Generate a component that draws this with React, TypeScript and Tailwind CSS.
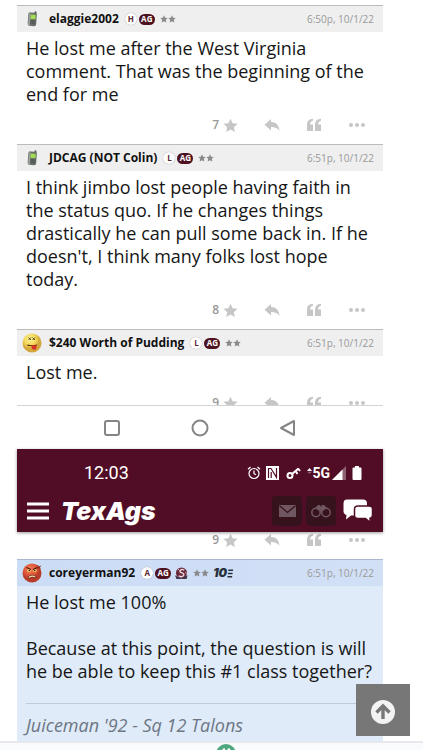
import type { ReactNode } from "react";

const STAR = "M12 1l3.3 7.4 8 .8-6 5.4 1.7 7.9L12 18.4l-7 4.1 1.7-7.9-6-5.4 8-.8z";

function Star({ className }: { className: string }) {
  return (
    <svg viewBox="0 0 24 24" className={className} fill="currentColor" aria-hidden="true">
      <path d={STAR} />
    </svg>
  );
}

function PhoneAvatar() {
  return (
    <svg viewBox="0 0 20 20" className="size-5" aria-hidden="true">
      <g transform="rotate(4 10 10)">
        <rect x="12" y="2" width="2" height="5" rx="1" fill="#5d635c" />
        <rect x="6" y="3.500" width="8.500" height="13.500" rx="2" fill="#666c66" />
        <rect x="6.500" y="4.500" width="2" height="12" rx="1" fill="#9a9f99" />
        <rect x="8.500" y="5.500" width="5" height="4.500" rx=".5" fill="#a2dc52" />
        <path d="M8.500 12h5M8.500 14h5" stroke="#3f453f" strokeDasharray="1 .5" />
      </g>
    </svg>
  );
}

function DizzyAvatar() {
  return (
    <svg viewBox="0 0 20 20" className="size-5" aria-hidden="true">
      <defs>
        <radialGradient id="dizzy" cx=".4" cy=".3">
          <stop offset="0" stopColor="#fff3a0" />
          <stop offset=".6" stopColor="#f3d858" />
          <stop offset="1" stopColor="#d3a63c" />
        </radialGradient>
      </defs>
      <circle cx="10" cy="10" r="9.500" fill="url(#dizzy)" />
      <path d="M6.500 4.500l2.500 2.500m0-2.500l-2.500 2.500M10.500 4.500l2.500 2.500m0-2.500l-2.500 2.500" stroke="#4b4015" strokeWidth=".9" />
      <path d="M5 11.500q5 1.500 10 0l-.5 1.500H6z" fill="#4d2208" />
      <path d="M9.500 12.300h5v2q0 3-2.500 2.500-2.500-.5-2.500-2.500z" fill="#d93428" />
    </svg>
  );
}

function AngryAvatar() {
  return (
    <svg viewBox="0 0 20 20" className="size-5" aria-hidden="true">
      <defs>
        <radialGradient id="angry" cx=".4" cy=".3">
          <stop offset="0" stopColor="#f08158" />
          <stop offset=".6" stopColor="#e25a3c" />
          <stop offset="1" stopColor="#b83c2a" />
        </radialGradient>
      </defs>
      <circle cx="10" cy="10" r="9.500" fill="url(#angry)" />
      <circle cx="7" cy="7.500" r="1.700" fill="#f6cf5a" />
      <circle cx="13" cy="7.500" r="1.700" fill="#f6cf5a" />
      <circle cx="7.300" cy="7.500" r=".8" fill="#301008" />
      <circle cx="12.700" cy="7.500" r=".8" fill="#301008" />
      <path d="M4.500 4.500l4.500 2M15.500 4.500l-4.500 2" stroke="#4d120a" strokeWidth="1.200" />
      <path d="M6 14q4-3.500 8-.5l-.5 1.500q-3.500-2-6.500.5z" fill="#fbe3b2" stroke="#5c1a0e" strokeWidth=".7" />
      <path d="M15.500 2l1.500 2 2-1M15.500 5l2-1 .500 2" stroke="#8d2014" strokeWidth=".8" fill="none" />
    </svg>
  );
}

function Badges({ letter }: { letter: string }) {
  return (
    <>
      <span className="flex size-3 shrink-0 items-center justify-center rounded-full bg-white text-[8px] leading-none font-bold text-[#5a2a35] shadow-[0_0_1px_#888]">
        {letter}
      </span>
      <span className="flex h-[11px] w-4 shrink-0 items-center justify-center rounded-full bg-[#4d1220] text-[8px] leading-none font-bold text-white">
        AG
      </span>
    </>
  );
}

function TwoStars() {
  return (
    <span className="flex shrink-0 text-[#8a8a8a]">
      <Star className="size-2" />
      <Star className="size-2" />
    </span>
  );
}

function TeamBadge() {
  return (
    <svg viewBox="0 0 14 14" className="size-[13px] shrink-0" aria-hidden="true">
      <circle cx="7" cy="6.500" r="6" fill="#6b2b3d" />
      <path d="M10 3.500Q7 1.500 5.500 4q-.5 2 2.500 2.500 2.500 1 1 3-2 2-5 0" fill="none" stroke="#e8d7de" strokeWidth="1.500" />
      <path d="M0 9l4 2 3 1.500L13.500 9l-1 4h-11z" fill="#3d3450" />
      <path d="M3 2l2 2M11 6l2 1" stroke="#d9bfca" />
    </svg>
  );
}

function TenBadge() {
  return (
    <span className="flex shrink-0 items-center text-[#26303d]">
      <span className="font-[Inter,sans-serif] text-[12px] leading-none font-black italic">10</span>
      <svg viewBox="0 0 7 10" className="h-[9px] w-[6px]" fill="none" stroke="currentColor" strokeWidth="1.800" aria-hidden="true">
        <path d="M1.500 1.200H7M1 5h5.500M.5 8.800H6" />
      </svg>
    </span>
  );
}

const actionButton = "flex h-4 items-center text-[#c6c6c6]";

function Actions({ count }: { count: number }) {
  return (
    <div className="flex h-[38px] shrink-0 items-center justify-end gap-[26px] pr-[17px]">
      <button type="button" className={actionButton + " gap-1"} aria-label={count + " stars"}>
        <span className="text-[12px] leading-4 font-semibold text-[#999]">{count}</span>
        <Star className="size-[15px]" />
      </button>
      <button type="button" className={actionButton} aria-label="Reply">
        <svg viewBox="0 0 16 14" className="h-[14px] w-4" fill="currentColor" aria-hidden="true">
          <path d="M7 1v3c5 0 8 3 8.500 9C13.500 10 11 9 7 9v3.500L.5 6.700z" />
        </svg>
      </button>
      <button type="button" className={actionButton} aria-label="Quote">
        <svg viewBox="0 0 16 14" className="h-[14px] w-4" fill="currentColor" aria-hidden="true">
          <path d="M7 .8v2C5 3.200 4.200 4.500 4.200 6.500H7V13H1V7C1 3.200 3 1 7 .8zM15 .8v2c-2 .4-2.800 1.700-2.800 3.700H15V13H9V7c0-3.800 2-6 6-6.200z" />
        </svg>
      </button>
      <button type="button" className={actionButton} aria-label="More">
        <svg viewBox="0 0 18 6" className="h-[6px] w-[18px]" fill="currentColor" aria-hidden="true">
          <circle cx="3" cy="3" r="2" />
          <circle cx="9" cy="3" r="2" />
          <circle cx="15" cy="3" r="2" />
        </svg>
      </button>
    </div>
  );
}

type PostProps = {
  avatar: ReactNode;
  name: string;
  letter: string;
  time: string;
  extra?: ReactNode;
  own?: boolean;
  children: ReactNode;
};

function Post({ avatar, name, letter, time, extra, own, children }: PostProps) {
  return (
    <article className={own ? "bg-[#dfebf9]" : "bg-white"}>
      <header
        className={
          "flex h-[27px] items-center border-t pr-[9px] pl-[5px] " +
          (own
            ? "border-[#a9b7d0] bg-linear-to-r from-[#cbdcf5] to-[#d2e0f6]"
            : "border-[#bcbcbc] bg-[#efefef]")
        }
      >
        {avatar}
        <h2 className="ml-[7px] text-[12px] leading-4 font-bold whitespace-nowrap text-[#111]">{name}</h2>
        <div className="ml-[6px] flex items-center gap-[2px]">
          <Badges letter={letter} />
          {own && (
            <span className="ml-[2px]">
              <TeamBadge />
            </span>
          )}
          <span className="w-px" />
          <TwoStars />
          <span className="w-0" />
          {extra}
        </div>
        <time className="ml-auto text-[10px] leading-4 whitespace-nowrap text-[#999]">{time}</time>
      </header>
      {children}
    </article>
  );
}

const bodyText = "pt-[5px] pr-[6px] pl-[9px] text-[18px] leading-[23px] text-[#161616]";

export default function App() {
  return (
    <div className="relative h-screen overflow-hidden bg-white font-['Open_Sans','Noto_Sans',sans-serif]">
      <main className="flex flex-col pt-[5px] pr-10 pl-[17px]">
        <Post avatar={<PhoneAvatar />} name="elaggie2002" letter="H" time="6:50p, 10/1/22">
          <p className={bodyText}>
            He lost me after the West Virginia comment. That was the beginning of the end for me
          </p>
          <Actions count={7} />
        </Post>

        <Post avatar={<PhoneAvatar />} name="JDCAG (NOT Colin)" letter="L" time="6:51p, 10/1/22">
          <p className={bodyText}>
            I think jimbo lost people having faith in the status quo. If he changes things drastically he can pull
            some back in. If he doesn't, I think many folks lost hope today.
          </p>
          <Actions count={8} />
        </Post>

        <div className="h-[76px] overflow-hidden">
          <Post avatar={<DizzyAvatar />} name="$240 Worth of Pudding" letter="L" time="6:51p, 10/1/22">
            <p className={bodyText}>Lost me.</p>
            <Actions count={9} />
          </Post>
        </div>

        <nav className="flex h-11 items-center justify-center gap-[70px] border-t border-[#d4d4d4] text-[#858585]">
          <button type="button" aria-label="Recent apps">
            <svg viewBox="0 0 18 18" className="size-[18px]" fill="none" stroke="currentColor" strokeWidth="2" aria-hidden="true">
              <rect x="2" y="2" width="14" height="14" rx="2" />
            </svg>
          </button>
          <button type="button" aria-label="Home">
            <svg viewBox="0 0 18 18" className="size-[18px]" fill="none" stroke="currentColor" strokeWidth="2" aria-hidden="true">
              <circle cx="9" cy="9" r="7.500" />
            </svg>
          </button>
          <button type="button" aria-label="Back">
            <svg viewBox="0 0 18 18" className="size-[18px]" fill="none" stroke="currentColor" strokeWidth="2" strokeLinejoin="round" aria-hidden="true">
              <path d="M15 2v14L2 9z" />
            </svg>
          </button>
        </nav>

        <div className="z-10 flex h-[83px] flex-col bg-[#520d26] text-white shadow-[0_1px_3px_rgba(0,0,0,0.4)]">
          <div className="flex h-[47px] items-center justify-between pt-px pr-[21px] pl-[67px]">
            <span className="font-[Roboto,sans-serif] text-[18px] leading-6">12:03</span>
            <div className="flex items-center">
              <svg viewBox="0 0 14 14" className="size-[14px]" fill="none" stroke="currentColor" strokeWidth="1.200" aria-hidden="true">
                <circle cx="7" cy="7.500" r="5" />
                <path d="M7 4.500v3.200l2 1M1 3.300L3.500 1M13 3.300L10.500 1" />
              </svg>
              <svg viewBox="0 0 13 14" className="ml-[5px] h-[14px] w-[13px]" aria-hidden="true">
                <path d="M0 0h13v14H0z" fill="currentColor" />
                <path d="M2.500 12V2.500H5l5.500 8.800V2M5.200 12V6" fill="none" stroke="#520d26" strokeWidth="1.200" />
              </svg>
              <svg viewBox="0 0 15 14" className="ml-[7px] h-[14px] w-[15px]" fill="none" stroke="currentColor" strokeWidth="2" aria-hidden="true">
                <circle cx="4" cy="9.500" r="2.500" />
                <path d="M6 8l6.500-5.500M9.500 5l2 3M12 2.500l2 2.500" />
              </svg>
              <svg viewBox="0 0 6 14" className="ml-[6px] h-[14px] w-[5px]" fill="currentColor" aria-hidden="true">
                <path d="M0 4.500L3 1l3 3.500z" />
                <path d="M0 5.500h6L3 8z" opacity=".35" />
              </svg>
              <span className="font-[Roboto,sans-serif] text-[14px] leading-4 font-bold">5G</span>
              <svg viewBox="0 0 14 14" className="ml-[2px] size-[14px]" fill="currentColor" aria-hidden="true">
                <path d="M14 0v14H0z" opacity=".35" />
                <path d="M10.500 3.500V14H0z" />
              </svg>
              <svg viewBox="0 0 9 14" className="ml-[6px] h-[14px] w-[10px]" fill="currentColor" aria-hidden="true">
                <path d="M2.500 0h4v1.500H8q1 0 1 1V13q0 1-1 1H1q-1 0-1-1V2.500q0-1 1-1h1.500z" />
              </svg>
            </div>
          </div>
          <div className="flex h-[30px] items-center pr-[10px] pl-[10px]">
            <button type="button" aria-label="Menu">
              <svg viewBox="0 0 22 18" className="h-[18px] w-[22px]" stroke="currentColor" strokeWidth="2.800" aria-hidden="true">
                <path d="M0 2h22M0 9h22M0 16h22" />
              </svg>
            </button>
            <a href="#" className="ml-3 font-[Inter,sans-serif] text-[25px] leading-[30px] font-black italic">
              TexAgs
            </a>
            <button type="button" aria-label="Messages" className="ml-auto flex size-[30px] items-center justify-center rounded-sm bg-[#36121c]">
              <svg viewBox="0 0 17 12" className="h-3 w-[17px]" aria-hidden="true">
                <path d="M0 0h17v12H0z" fill="#705661" />
                <path d="M.5 .7l8 6.800 8-6.800" fill="none" stroke="#36121c" strokeWidth="1.300" />
              </svg>
            </button>
            <button type="button" aria-label="Search" className="ml-[4px] flex size-[30px] items-center justify-center rounded-sm bg-[#36121c]">
              <svg viewBox="0 0 20 14" className="h-[14px] w-5" fill="none" stroke="#705661" strokeWidth="1.500" aria-hidden="true">
                <circle cx="5" cy="8.500" r="4.200" />
                <circle cx="15" cy="8.500" r="4.200" />
                <path d="M4 4l3-3h2l1 2 1-2h2l3 3-5 3.500H9z" fill="#705661" stroke="none" />
              </svg>
            </button>
            <button type="button" aria-label="Forums" className="ml-[7px]">
              <svg viewBox="0 0 30 24" className="h-6 w-[30px]" aria-hidden="true">
                <path d="M4 .5h16q4 0 4 4v8q0 4-4 4H8l-5 4 .5-4.500Q.5 15 .5 12V4.500q0-4 3.500-4z" fill="currentColor" />
                <path d="M15 7h11q3.500 0 3.500 3v6q0 3-2.500 3.300l.5 4.200-5-4H15q-3.500 0-3.500-3v-6.500Q11.500 7 15 7z" fill="currentColor" stroke="#520d26" strokeWidth="1.500" />
              </svg>
            </button>
          </div>
        </div>

        <div className="flex h-[27px] flex-col justify-end overflow-hidden">
          <Actions count={9} />
        </div>

        <Post avatar={<AngryAvatar />} name="coreyerman92" letter="A" time="6:51p, 10/1/22" own extra={<TenBadge />}>
          <div className={bodyText}>
            <p>He lost me 100%</p>
            <p className="mt-[23px]">Because at this point, the question is will he be able to keep this #1 class together?</p>
            <p className="mt-5 border-t border-[#bfcbdd] pt-[10px] pb-1 text-[#6d7683] italic">Juiceman '92 - Sq 12 Talons</p>
          </div>
        </Post>
      </main>

      <footer className="flex h-5 justify-center overflow-hidden border-t-2 border-[#e6e8eb] bg-[#fafbfd] pl-7">
        <span className="mt-px flex size-5 justify-center rounded-full bg-[#4fa77f] pt-1">
          <svg viewBox="0 0 12 8" className="h-2 w-3" fill="none" stroke="white" strokeWidth="1.500" aria-hidden="true">
            <path d="M1 4l3-3 2 3 3-3 2 3" />
          </svg>
        </span>
      </footer>

      <button
        type="button"
        aria-label="Back to top"
        className="absolute right-[13px] bottom-[14px] flex h-[52px] w-[54px] items-center justify-center bg-[#777] pt-1"
      >
        <svg viewBox="0 0 24 24" className="size-6" aria-hidden="true">
          <circle cx="12" cy="12" r="12" fill="#f3f3f3" />
          <path d="M12 19V7M5.500 12.500L12 6l6.500 6.500" fill="none" stroke="#777" strokeWidth="3.400" />
        </svg>
      </button>
    </div>
  );
}
